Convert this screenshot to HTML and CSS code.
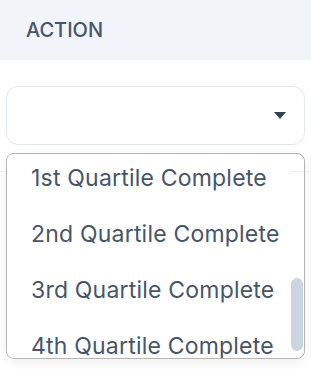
FILE: index.html
```html
<!DOCTYPE html>
<html>
<head>
<meta charset="utf-8">
<link rel="stylesheet" href="styles.css">
</head>
<body>
<div class="table">
  <div class="head">ACTION</div>
  <div class="cell">
    <div class="select">
      <svg class="caret" width="12" height="7" viewBox="0 0 12 7"><path d="M0 0H12L6 7Z" fill="#334155"/></svg>
    </div>
  </div>
  <div class="dropdown">
    <ul class="options">
      <li>1st Quartile Complete</li>
      <li>2nd Quartile Complete</li>
      <li>3rd Quartile Complete</li>
      <li>4th Quartile Complete</li>
    </ul>
    <div class="thumb"></div>
  </div>
</div>
</body>
</html>
```
FILE: styles.css
```css
html, body {
  margin: 0;
  padding: 0;
  background: #ffffff;
}
body {
  font-family: Inter, "Noto Sans", sans-serif;
  width: 311px;
  height: 369px;
  overflow: hidden;
}
.table {
  position: relative;
  height: 369px;
}
.head {
  height: 60px;
  background: #f1f5f9;
  display: flex;
  align-items: center;
  padding-left: 26px;
  font-size: 20px;
  font-weight: 500;
  color: #475569;
}
.cell {
  padding: 26px 6px;
  border-bottom: 1px solid #eef1f5;
}
.select {
  height: 57px;
  border: 1px solid #e2e8f0;
  border-radius: 12px;
  display: flex;
  align-items: center;
  justify-content: flex-end;
  padding-right: 18px;
}
.caret {
  display: block;
}
.dropdown {
  position: absolute;
  top: 153px;
  left: 6px;
  width: 297px;
  height: 204px;
  border: 1px solid #b4b4b4;
  border-radius: 8px;
  box-shadow: 0 4px 12px rgba(0, 0, 0, 0.06);
  overflow: hidden;
}
.options {
  list-style: none;
  margin: -4.5px 13px 0 0;
  padding: 0;
  background: #ffffff;
}
.options li {
  height: 56.3px;
  line-height: 56.3px;
  padding-left: 24px;
  font-size: 23px;
  letter-spacing: 0.2px;
  color: #475569;
  white-space: nowrap;
}
.thumb {
  position: absolute;
  right: 1px;
  top: 124px;
  width: 12px;
  height: 73px;
  border-radius: 6px;
  background: #cbd5e1;
}
```
